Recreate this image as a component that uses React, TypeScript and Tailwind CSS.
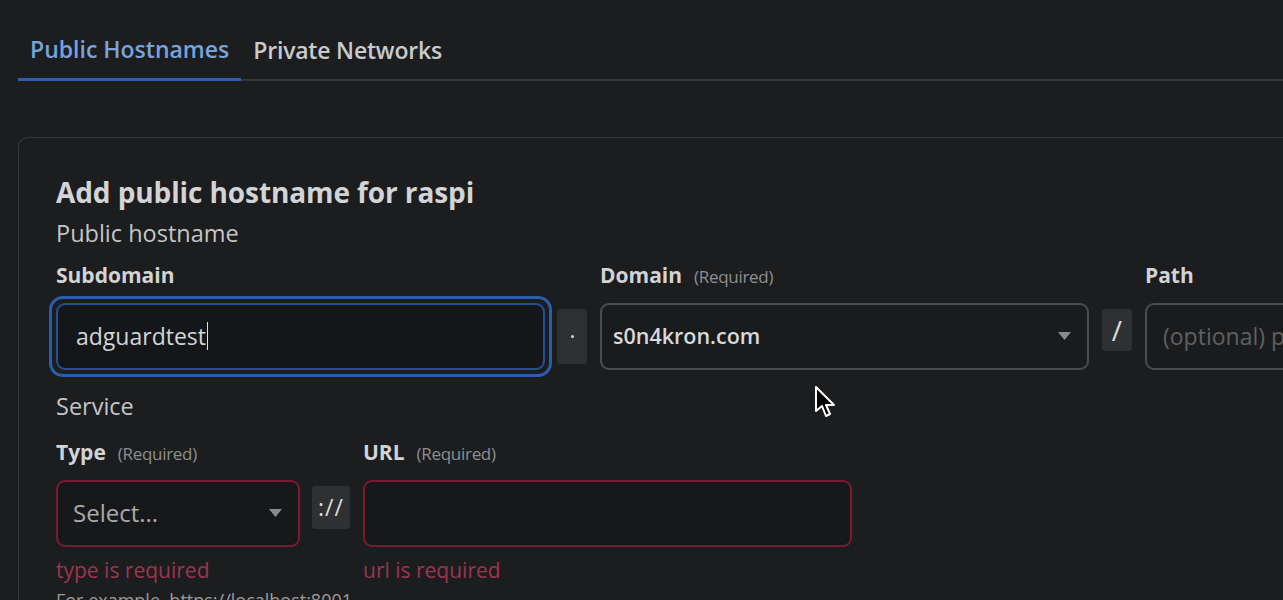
import React from "react";

const font = { fontFamily: '"Open Sans", "Noto Sans", Arial, sans-serif' };

function Caret() {
  return (
    <svg width="13" height="8" viewBox="0 0 13 8" className="shrink-0">
      <path d="M0 0 L13 0 L6.5 8 Z" fill="#8a8b8d" />
    </svg>
  );
}

function Label({ text, required }: { text: string; required?: boolean }) {
  return (
    <div className="flex items-baseline gap-3 h-[24px] mb-[19px]">
      <span className="text-[21px] font-bold text-[#d2d3d4]">{text}</span>
      {required && <span className="text-[17px] text-[#8e8f91] tracking-[-0.3px]">(Required)</span>}
    </div>
  );
}

function MouseArrow() {
  return (
    <svg width="24" height="34" viewBox="0 0 24 34" className="absolute left-[814px] top-[385px] pointer-events-none">
      <path
        d="M2 2 L2 26 L8 21 L12 31 L16 29 L12 20 L20 20 Z"
        fill="#000"
        stroke="#fff"
        strokeWidth="2"
        strokeLinejoin="round"
      />
    </svg>
  );
}

export default function App() {
  return (
    <div className="relative w-[1283px] h-[600px] overflow-hidden bg-[#1c1d1f]" style={font}>
      {/* tabs */}
      <div className="pl-[18px] pt-[32px]">
        <div className="flex items-end border-b-2 border-[#37383a]">
          <div className="px-[12px] pb-[11px] -mb-[2px] border-b-[3px] border-[#2f5fae]">
            <span className="text-[23px] font-semibold text-[#78a3dc]">Public Hostnames</span>
          </div>
          <div className="px-[12px] pb-[11px]">
            <span className="text-[23px] font-semibold text-[#c9cacb] tracking-[-0.2px]">Private Networks</span>
          </div>
        </div>
      </div>

      {/* card */}
      <div className="ml-[18px] mt-[56px] rounded-tl-[10px] border-l border-t border-[#37383a] pl-[37px] pt-[34px] h-[600px]">
        <h2 className="text-[28px] font-bold text-[#d3d4d5] leading-[40px] tracking-[-0.1px]">
          Add public hostname for raspi
        </h2>
        <div className="text-[23.5px] text-[#c4c5c6] leading-[32px] mt-[5px]">Public hostname</div>

        {/* hostname row */}
        <div className="flex mt-[11px]">
          <div className="w-[489px] shrink-0">
            <Label text="Subdomain" />
            <div className="relative">
              <div className="absolute -inset-[7px] rounded-[14px] border-[3px] border-[#2a5cb0]" />
              <div className="h-[67px] rounded-[9px] border-2 border-[#224f98] bg-[#151619] flex items-center pl-[18px]">
                <span className="text-[23px] text-[#d4d5d6]">adguardtest</span>
                <span className="w-[1.5px] h-[28px] bg-[#e0e0e0] ml-[1px]" />
              </div>
            </div>
          </div>
          <div className="w-[30px] h-[55px] mt-[49px] mx-[12px] shrink-0 rounded-[3px] bg-[#2f3032] flex items-center justify-center">
            <span className="w-[3px] h-[3px] rounded-full bg-[#d8d8d8]" />
          </div>
          <div className="w-[489px] shrink-0 ml-[1px]">
            <Label text="Domain" required />
            <div className="h-[67px] rounded-[9px] border-2 border-[#4b4c4e] bg-[#1a1b1d] flex items-center pl-[11px] pr-[16px]">
              <span className="flex-1 text-[21.5px] font-semibold text-[#d8d9da]">s0n4kron.com</span>
              <Caret />
            </div>
          </div>
          <div className="w-[30px] h-[42px] mt-[49px] mx-[13px] shrink-0 rounded-[3px] bg-[#2f3032] flex items-center justify-center">
            <span className="text-[28px] text-[#dcdcdc] leading-none">/</span>
          </div>
          <div className="w-[300px] shrink-0">
            <Label text="Path" />
            <div className="h-[67px] rounded-l-[9px] border-2 border-r-0 border-[#4b4c4e] bg-[#1a1b1d] flex items-center pl-[16px] overflow-hidden">
              <span className="text-[23px] text-[#5f6062] whitespace-nowrap">(optional) path</span>
            </div>
          </div>
        </div>

        <div className="text-[23.5px] text-[#c4c5c6] leading-[32px] mt-[20px]">Service</div>

        {/* service row */}
        <div className="flex mt-[15px]">
          <div className="w-[244px] shrink-0">
            <Label text="Type" required />
            <div className="h-[67px] rounded-[9px] border-2 border-[#7c1a30] bg-[#17181a] flex items-center pl-[15px] pr-[16px]">
              <span className="flex-1 text-[24px] text-[#a9aaab]">Select...</span>
              <Caret />
            </div>
            <div className="text-[21px] text-[#9c3552] leading-[28px] mt-[9px] whitespace-nowrap">type is required</div>
            <div className="text-[18px] text-[#9a9b9c] leading-[26px] mt-[3px] whitespace-nowrap">For example, https://localhost:8001</div>
          </div>
          <div className="w-[38px] h-[43px] mt-[49px] mx-[12px] shrink-0 rounded-[3px] bg-[#2f3032] flex items-center justify-center">
            <span className="text-[23px] text-[#dcdcdc] leading-none tracking-[1px]">://</span>
          </div>
          <div className="w-[489px] shrink-0 ml-[1px]">
            <Label text="URL" required />
            <div className="h-[67px] rounded-[9px] border-2 border-[#7c1a30] bg-[#17181a]" />
            <div className="text-[21px] text-[#9c3552] leading-[28px] mt-[9px] whitespace-nowrap">url is required</div>
          </div>
        </div>
      </div>

      <MouseArrow />
    </div>
  );
}
